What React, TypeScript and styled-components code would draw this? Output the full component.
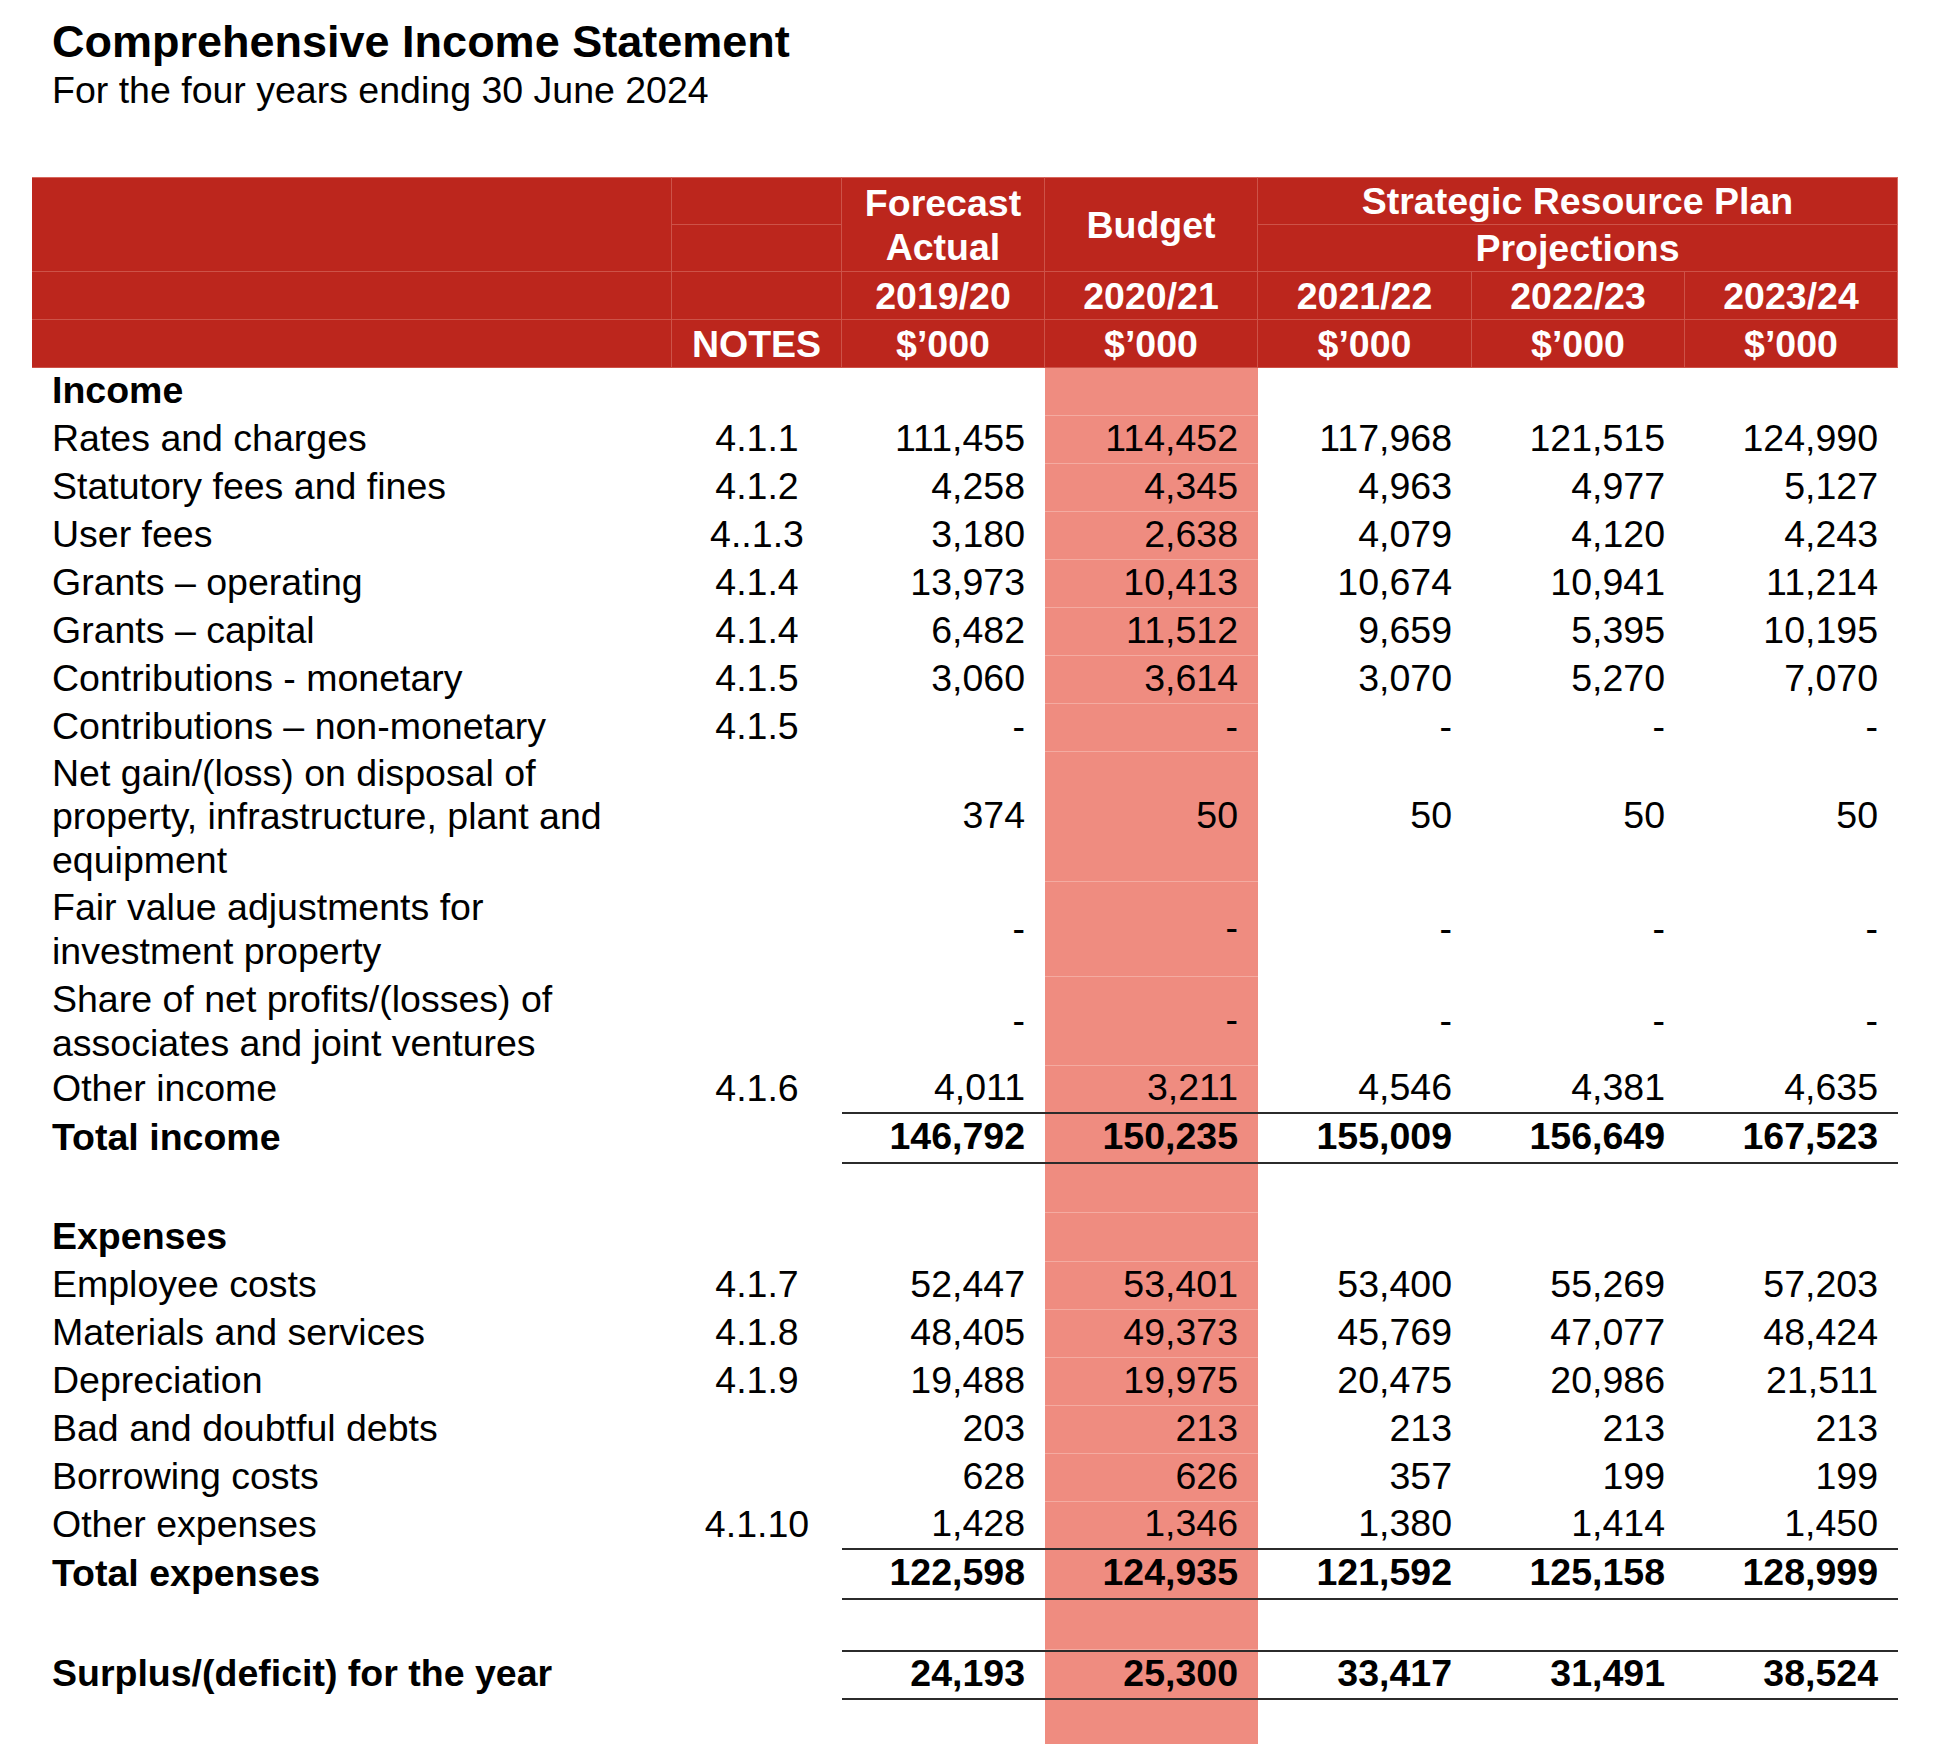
import React from "react";
import styled, { createGlobalStyle } from "styled-components";

const GlobalStyle = createGlobalStyle`
  html, body {
    margin: 0;
    padding: 0;
    background: #ffffff;
  }
  body {
    font-family: "Liberation Sans", Arial, Helvetica, sans-serif;
    color: #000000;
  }
`;

const Page = styled.main`
  width: 1958px;
  box-sizing: border-box;
  padding: 16px 0 0 32px;
`;

const Heading = styled.header`
  padding-left: 20px;
  margin-bottom: 65px;
`;

const Title = styled.h1`
  margin: 0;
  font-size: 45px;
  line-height: 52px;
  font-weight: 700;
`;

const Subtitle = styled.p`
  margin: 0;
  font-size: 37.5px;
  line-height: 44px;
  font-weight: 400;
`;

const Table = styled.table`
  border-collapse: separate;
  border-spacing: 0;
  table-layout: fixed;
  width: 1866px;
  font-size: 37.5px;
`;

const Col = styled.col<{ $w: number }>`
  width: ${(p) => p.$w}px;
`;

const HeadRow = styled.tr<{ $h: number }>`
  height: ${(p) => p.$h}px;
  &:first-child > th {
    border-top: 1px solid #d7675e;
  }
`;

const HeadCell = styled.th`
  background: #bc261d;
  color: #ffffff;
  font-weight: 700;
  text-align: center;
  vertical-align: middle;
  padding: 0;
  line-height: 44px;
  white-space: nowrap;
  border-right: 1px solid #cd5248;
  border-bottom: 1px solid #cd5248;
  &:last-child {
    border-right-color: #d7675e;
  }
`;

const BodyRow = styled.tr<{ $h: number }>`
  height: ${(p) => p.$h}px;
`;

const LabelCell = styled.td<{ $bold?: boolean; $wrapped?: boolean }>`
  padding: ${(p) => (p.$wrapped ? "0 0 0 20px" : "0 0 4px 20px")};
  text-align: left;
  vertical-align: middle;
  line-height: ${(p) => (p.$wrapped ? "43.4px" : "42px")};
  font-weight: ${(p) => (p.$bold ? 700 : 400)};
  white-space: nowrap;
`;

const NoteCell = styled.td`
  padding: 0 0 4px 0;
  text-align: center;
  vertical-align: middle;
  line-height: 42px;
  white-space: nowrap;
`;

const ValueCell = styled.td<{
  $bold?: boolean;
  $budget?: boolean;
  $ruleTop?: boolean;
  $ruleBottom?: boolean;
}>`
  padding: 0 20px 4px 0;
  text-align: right;
  vertical-align: middle;
  line-height: 42px;
  white-space: nowrap;
  font-weight: ${(p) => (p.$bold ? 700 : 400)};
  background: ${(p) => (p.$budget ? "#ef8c80" : "transparent")};
  border-top: ${(p) => (p.$ruleTop ? "2px solid #2b2b2b" : "none")};
  border-bottom: ${(p) =>
    p.$ruleBottom
      ? "2px solid #2b2b2b"
      : p.$budget
      ? "1px solid #f4aba1"
      : "none"};
`;

type Row = {
  label?: string[];
  note?: string;
  values?: string[];
  kind: "heading" | "item" | "total" | "spacer";
  h: number;
  ruleTop?: boolean;
  ruleBottom?: boolean;
};

const DASH = ["-", "-", "-", "-", "-"];

const rows: Row[] = [
  { kind: "heading", label: ["Income"], h: 48 },
  { kind: "item", label: ["Rates and charges"], note: "4.1.1", values: ["111,455", "114,452", "117,968", "121,515", "124,990"], h: 48 },
  { kind: "item", label: ["Statutory fees and fines"], note: "4.1.2", values: ["4,258", "4,345", "4,963", "4,977", "5,127"], h: 48 },
  { kind: "item", label: ["User fees"], note: "4..1.3", values: ["3,180", "2,638", "4,079", "4,120", "4,243"], h: 48 },
  { kind: "item", label: ["Grants – operating"], note: "4.1.4", values: ["13,973", "10,413", "10,674", "10,941", "11,214"], h: 48 },
  { kind: "item", label: ["Grants – capital"], note: "4.1.4", values: ["6,482", "11,512", "9,659", "5,395", "10,195"], h: 48 },
  { kind: "item", label: ["Contributions - monetary"], note: "4.1.5", values: ["3,060", "3,614", "3,070", "5,270", "7,070"], h: 48 },
  { kind: "item", label: ["Contributions – non-monetary"], note: "4.1.5", values: DASH, h: 48 },
  {
    kind: "item",
    label: ["Net gain/(loss) on disposal of", "property, infrastructure, plant and", "equipment"],
    values: ["374", "50", "50", "50", "50"],
    h: 130,
  },
  { kind: "item", label: ["Fair value adjustments for", "investment property"], values: DASH, h: 95 },
  { kind: "item", label: ["Share of net profits/(losses) of", "associates and joint ventures"], values: DASH, h: 89 },
  { kind: "item", label: ["Other income"], note: "4.1.6", values: ["4,011", "3,211", "4,546", "4,381", "4,635"], h: 48, ruleBottom: true },
  { kind: "total", label: ["Total income"], values: ["146,792", "150,235", "155,009", "156,649", "167,523"], h: 50, ruleBottom: true },
  { kind: "spacer", h: 49 },
  { kind: "heading", label: ["Expenses"], h: 49 },
  { kind: "item", label: ["Employee costs"], note: "4.1.7", values: ["52,447", "53,401", "53,400", "55,269", "57,203"], h: 48 },
  { kind: "item", label: ["Materials and services"], note: "4.1.8", values: ["48,405", "49,373", "45,769", "47,077", "48,424"], h: 48 },
  { kind: "item", label: ["Depreciation"], note: "4.1.9", values: ["19,488", "19,975", "20,475", "20,986", "21,511"], h: 48 },
  { kind: "item", label: ["Bad and doubtful debts"], values: ["203", "213", "213", "213", "213"], h: 48 },
  { kind: "item", label: ["Borrowing costs"], values: ["628", "626", "357", "199", "199"], h: 48 },
  { kind: "item", label: ["Other expenses"], note: "4.1.10", values: ["1,428", "1,346", "1,380", "1,414", "1,450"], h: 48, ruleBottom: true },
  { kind: "total", label: ["Total expenses"], values: ["122,598", "124,935", "121,592", "125,158", "128,999"], h: 50, ruleBottom: true },
  { kind: "spacer", h: 50 },
  {
    kind: "total",
    label: ["Surplus/(deficit) for the year"],
    values: ["24,193", "25,300", "33,417", "31,491", "38,524"],
    h: 50,
    ruleTop: true,
    ruleBottom: true,
  },
  { kind: "spacer", h: 50 },
];

const years = ["2019/20", "2020/21", "2021/22", "2022/23", "2023/24"];
const colWidths = [640, 170, 203, 213, 214, 213, 213];

function renderLabel(lines?: string[]) {
  if (!lines) return null;
  return lines.map((line, i) => (
    <React.Fragment key={i}>
      {i > 0 && <br />}
      {line}
    </React.Fragment>
  ));
}

export default function App() {
  return (
    <>
      <GlobalStyle />
      <Page>
        <Heading>
          <Title>Comprehensive Income Statement</Title>
          <Subtitle>For the four years ending 30 June 2024</Subtitle>
        </Heading>
        <Table>
          <colgroup>
            {colWidths.map((w, i) => (
              <Col key={i} $w={w} />
            ))}
          </colgroup>
          <thead>
            <HeadRow $h={48}>
              <HeadCell rowSpan={2} />
              <HeadCell />
              <HeadCell rowSpan={2}>
                Forecast
                <br />
                Actual
              </HeadCell>
              <HeadCell rowSpan={2}>Budget</HeadCell>
              <HeadCell colSpan={3}>Strategic Resource Plan</HeadCell>
            </HeadRow>
            <HeadRow $h={47}>
              <HeadCell />
              <HeadCell colSpan={3}>Projections</HeadCell>
            </HeadRow>
            <HeadRow $h={48}>
              <HeadCell />
              <HeadCell />
              {years.map((y) => (
                <HeadCell key={y}>{y}</HeadCell>
              ))}
            </HeadRow>
            <HeadRow $h={48}>
              <HeadCell />
              <HeadCell>NOTES</HeadCell>
              {years.map((y) => (
                <HeadCell key={y}>$’000</HeadCell>
              ))}
            </HeadRow>
          </thead>
          <tbody>
            {rows.map((row, ri) => {
              const bold = row.kind === "heading" || row.kind === "total";
              const vals = row.values ?? ["", "", "", "", ""];
              const wrapped = (row.label?.length ?? 0) > 1;
              return (
                <BodyRow key={ri} $h={row.h}>
                  <LabelCell $bold={bold} $wrapped={wrapped}>
                    {renderLabel(row.label)}
                  </LabelCell>
                  <NoteCell>{row.note ?? ""}</NoteCell>
                  {vals.map((v, ci) => (
                    <ValueCell
                      key={ci}
                      $bold={row.kind === "total"}
                      $budget={ci === 1}
                      $ruleTop={row.ruleTop}
                      $ruleBottom={row.ruleBottom}
                    >
                      {v}
                    </ValueCell>
                  ))}
                </BodyRow>
              );
            })}
          </tbody>
        </Table>
      </Page>
    </>
  );
}
